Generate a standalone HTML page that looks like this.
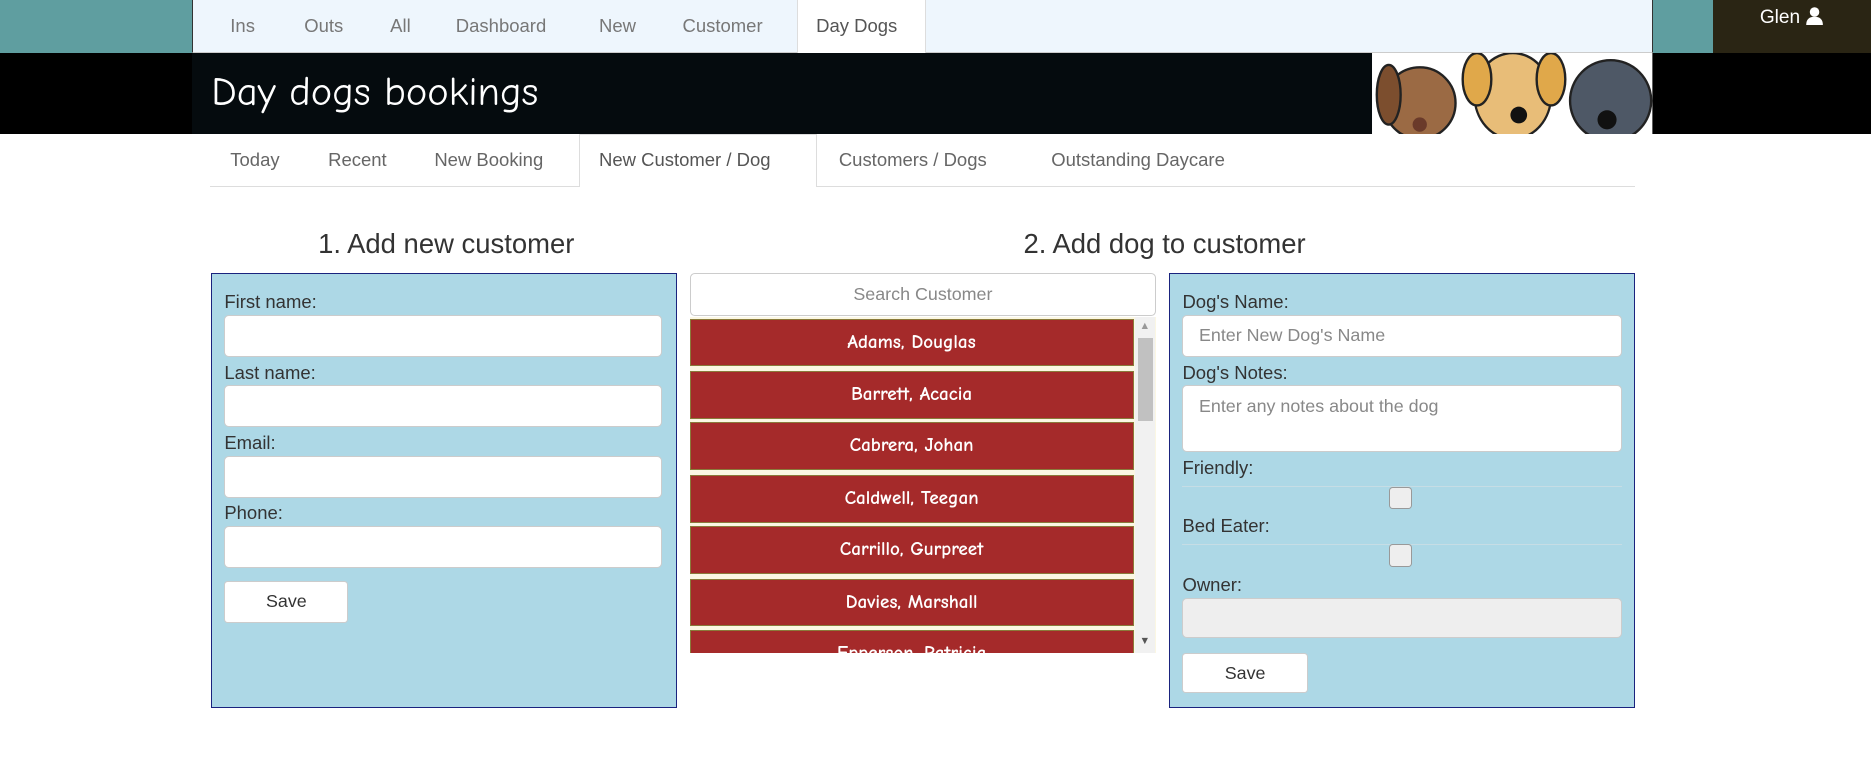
<!DOCTYPE html>
<html><head><meta charset="utf-8"><style>
html,body{margin:0;padding:0;background:#fff;width:1871px;height:763px;overflow:hidden}
#w{zoom:1.1932;position:relative;width:1568px;height:640px;font-family:"Liberation Sans",sans-serif;color:#333}
.a{position:absolute}
.nt{position:absolute;top:0;height:44px;line-height:44px;font-size:15.5px;color:#777}
.t2{position:absolute;top:112px;height:44px;line-height:44px;font-size:15.5px;color:#666}
.cm{font-family:"Comic Sans MS","Comic Neue",cursive}
.lbl{position:absolute;font-size:15.5px;color:#333}
.inp{position:absolute;background:#fff;border:1px solid #ccc;border-radius:4px;box-sizing:border-box}
.it{position:absolute;left:578px;width:372px;height:40px;background:#a52a2a;border:1px solid #8a7a3a;box-sizing:border-box;color:#fff;text-align:center;line-height:38px;font-size:16px;font-weight:bold}
.btn{position:absolute;background:#fff;border:1px solid #ccc;border-radius:3px;box-sizing:border-box;text-align:center;font-size:15px;color:#333;line-height:33px}
</style></head><body><div id="w">
<div class="a" style="left:0;top:0;width:1568px;height:44px;background:#5f9ea0"></div>
<div class="a" style="left:161px;top:0;width:1224px;height:44px;background:#eef6fd;border-left:1px solid #333;border-right:1px solid #333;box-sizing:border-box;border-bottom:1px solid #ccc"></div>
<div class="a" style="left:668px;top:0;width:108px;height:45px;background:#fff;border:1px solid #ddd;border-top:0;box-sizing:border-box"></div>
<div class="nt" style="left:193px">Ins</div><div class="nt" style="left:255px">Outs</div><div class="nt" style="left:327px">All</div><div class="nt" style="left:382px">Dashboard</div><div class="nt" style="left:502px">New</div><div class="nt" style="left:572px">Customer</div><div class="nt" style="left:684px;color:#555">Day Dogs</div>
<div class="a" style="left:1436px;top:0;width:132px;height:44px;background:#2a2514;color:#fff;font-size:16px;line-height:30px;text-align:center">Glen <svg width="16" height="16" viewBox="0 0 16 16" style="vertical-align:-2px"><circle cx="8" cy="5" r="4" fill="#fff"/><path d="M1 16 Q1 9 8 9 Q15 9 15 16Z" fill="#fff"/></svg></div>
<div class="a" style="left:0;top:44px;width:1568px;height:68px;background:#000"></div>
<div class="a" style="left:161px;top:44px;width:989px;height:68px;background:#050b0e"></div>
<div class="a cm" style="left:177px;top:58px;font-size:34px;color:#fff;line-height:40px">Day dogs bookings</div>
<svg class="a" style="left:1150px;top:44px" width="235" height="68" viewBox="0 0 235 68">
<rect width="235" height="68" fill="#fff"/>
<ellipse cx="40" cy="42" rx="30" ry="30" fill="#9b6a44" stroke="#222" stroke-width="2"/>
<ellipse cx="14" cy="35" rx="10" ry="25" fill="#7c4e2e" stroke="#222" stroke-width="2"/>
<ellipse cx="118" cy="36" rx="32" ry="36" fill="#e8bd78" stroke="#222" stroke-width="2"/>
<ellipse cx="88" cy="22" rx="12" ry="22" fill="#e0a84a" stroke="#222" stroke-width="2"/>
<ellipse cx="150" cy="22" rx="12" ry="22" fill="#e0a84a" stroke="#222" stroke-width="2"/>
<ellipse cx="200" cy="40" rx="34" ry="34" fill="#4e5866" stroke="#222" stroke-width="2"/>
<circle cx="123" cy="52" r="7" fill="#111"/><circle cx="197" cy="56" r="8" fill="#111"/><circle cx="40" cy="60" r="6" fill="#6a3a2a"/>
</svg>
<div class="a" style="left:176px;top:156px;width:1194px;height:1px;background:#ddd"></div>
<div class="a" style="left:485px;top:112px;width:200px;height:45px;background:#fff;border:1px solid #ddd;border-bottom:0;box-sizing:border-box"></div>
<div class="t2" style="left:193px">Today</div><div class="t2" style="left:275px">Recent</div><div class="t2" style="left:364px">New Booking</div><div class="t2" style="left:502px;color:#555">New Customer / Dog</div><div class="t2" style="left:703px">Customers / Dogs</div><div class="t2" style="left:881px">Outstanding Daycare</div>
<div class="a" style="left:177px;width:394px;top:191px;text-align:center;font-size:23px;color:#333">1. Add new customer</div>
<div class="a" style="left:578px;width:796px;top:191px;text-align:center;font-size:23px;color:#333">2. Add dog to customer</div>
<div class="a" style="left:177px;top:229px;width:390px;height:364px;background:#add8e6;border:1px solid #1a237e;box-sizing:border-box"></div>
<div class="lbl" style="left:188px;top:244px">First name:</div><div class="inp" style="left:188px;top:264px;width:367px;height:35px"></div>
<div class="lbl" style="left:188px;top:303px">Last name:</div><div class="inp" style="left:188px;top:323px;width:367px;height:35px"></div>
<div class="lbl" style="left:188px;top:362px">Email:</div><div class="inp" style="left:188px;top:382px;width:367px;height:35px"></div>
<div class="lbl" style="left:188px;top:421px">Phone:</div><div class="inp" style="left:188px;top:441px;width:367px;height:35px"></div>
<div class="btn" style="left:188px;top:487px;width:104px;height:35px">Save</div>
<div class="inp" style="left:578px;top:229px;width:391px;height:36px;text-align:center;line-height:34px;color:#888;font-size:15px">Search Customer</div>
<div class="a" style="left:578px;top:266px;width:391px;height:281px;background:#fbf7e3;overflow:hidden"></div>
<div class="a" style="left:951px;top:266px;width:17px;height:281px;background:#f1f1f1"></div>
<div class="a" style="left:954px;top:283px;width:12px;height:70px;background:#c1c1c1"></div>
<div class="a" style="left:955px;top:268px;font-size:9px;color:#999">▲</div><div class="a" style="left:955px;top:532px;font-size:9px;color:#555">▼</div>
<div class="it cm" style="top:267px">Adams, Douglas</div>
<div class="it cm" style="top:311px">Barrett, Acacia</div>
<div class="it cm" style="top:354px">Cabrera, Johan</div>
<div class="it cm" style="top:398px">Caldwell, Teegan</div>
<div class="it cm" style="top:441px">Carrillo, Gurpreet</div>
<div class="it cm" style="top:485px">Davies, Marshall</div>
<div class="it cm" style="top:528px;height:19px;line-height:38px;overflow:hidden;border-bottom:0">Epperson, Patricia</div>
<div class="a" style="left:980px;top:229px;width:390px;height:364px;background:#add8e6;border:1px solid #1a237e;box-sizing:border-box"></div>
<div class="lbl" style="left:991px;top:244px">Dog's Name:</div><div class="inp" style="left:991px;top:264px;width:368px;height:35px;color:#888;font-size:15px;padding-left:13px;line-height:33px">Enter New Dog's Name</div>
<div class="lbl" style="left:991px;top:303px">Dog's Notes:</div><div class="inp" style="left:991px;top:323px;width:368px;height:56px;color:#888;font-size:15px;padding-left:13px;padding-top:8px">Enter any notes about the dog</div>
<div class="lbl" style="left:991px;top:383px">Friendly:</div><div class="a" style="left:991px;top:407px;width:368px;height:1px;background:#c6dde5"></div>
<div class="a" style="left:1164px;top:408px;width:19px;height:19px;background:#eee;border:1px solid #999;border-radius:3px;box-sizing:border-box"></div>
<div class="lbl" style="left:991px;top:432px">Bed Eater:</div><div class="a" style="left:991px;top:456px;width:368px;height:1px;background:#c6dde5"></div>
<div class="a" style="left:1164px;top:456px;width:19px;height:19px;background:#eee;border:1px solid #999;border-radius:3px;box-sizing:border-box"></div>
<div class="lbl" style="left:991px;top:481px">Owner:</div><div class="inp" style="left:991px;top:501px;width:368px;height:34px;background:#eee"></div>
<div class="btn" style="left:991px;top:547px;width:105px;height:34px">Save</div>
</div></body></html>
